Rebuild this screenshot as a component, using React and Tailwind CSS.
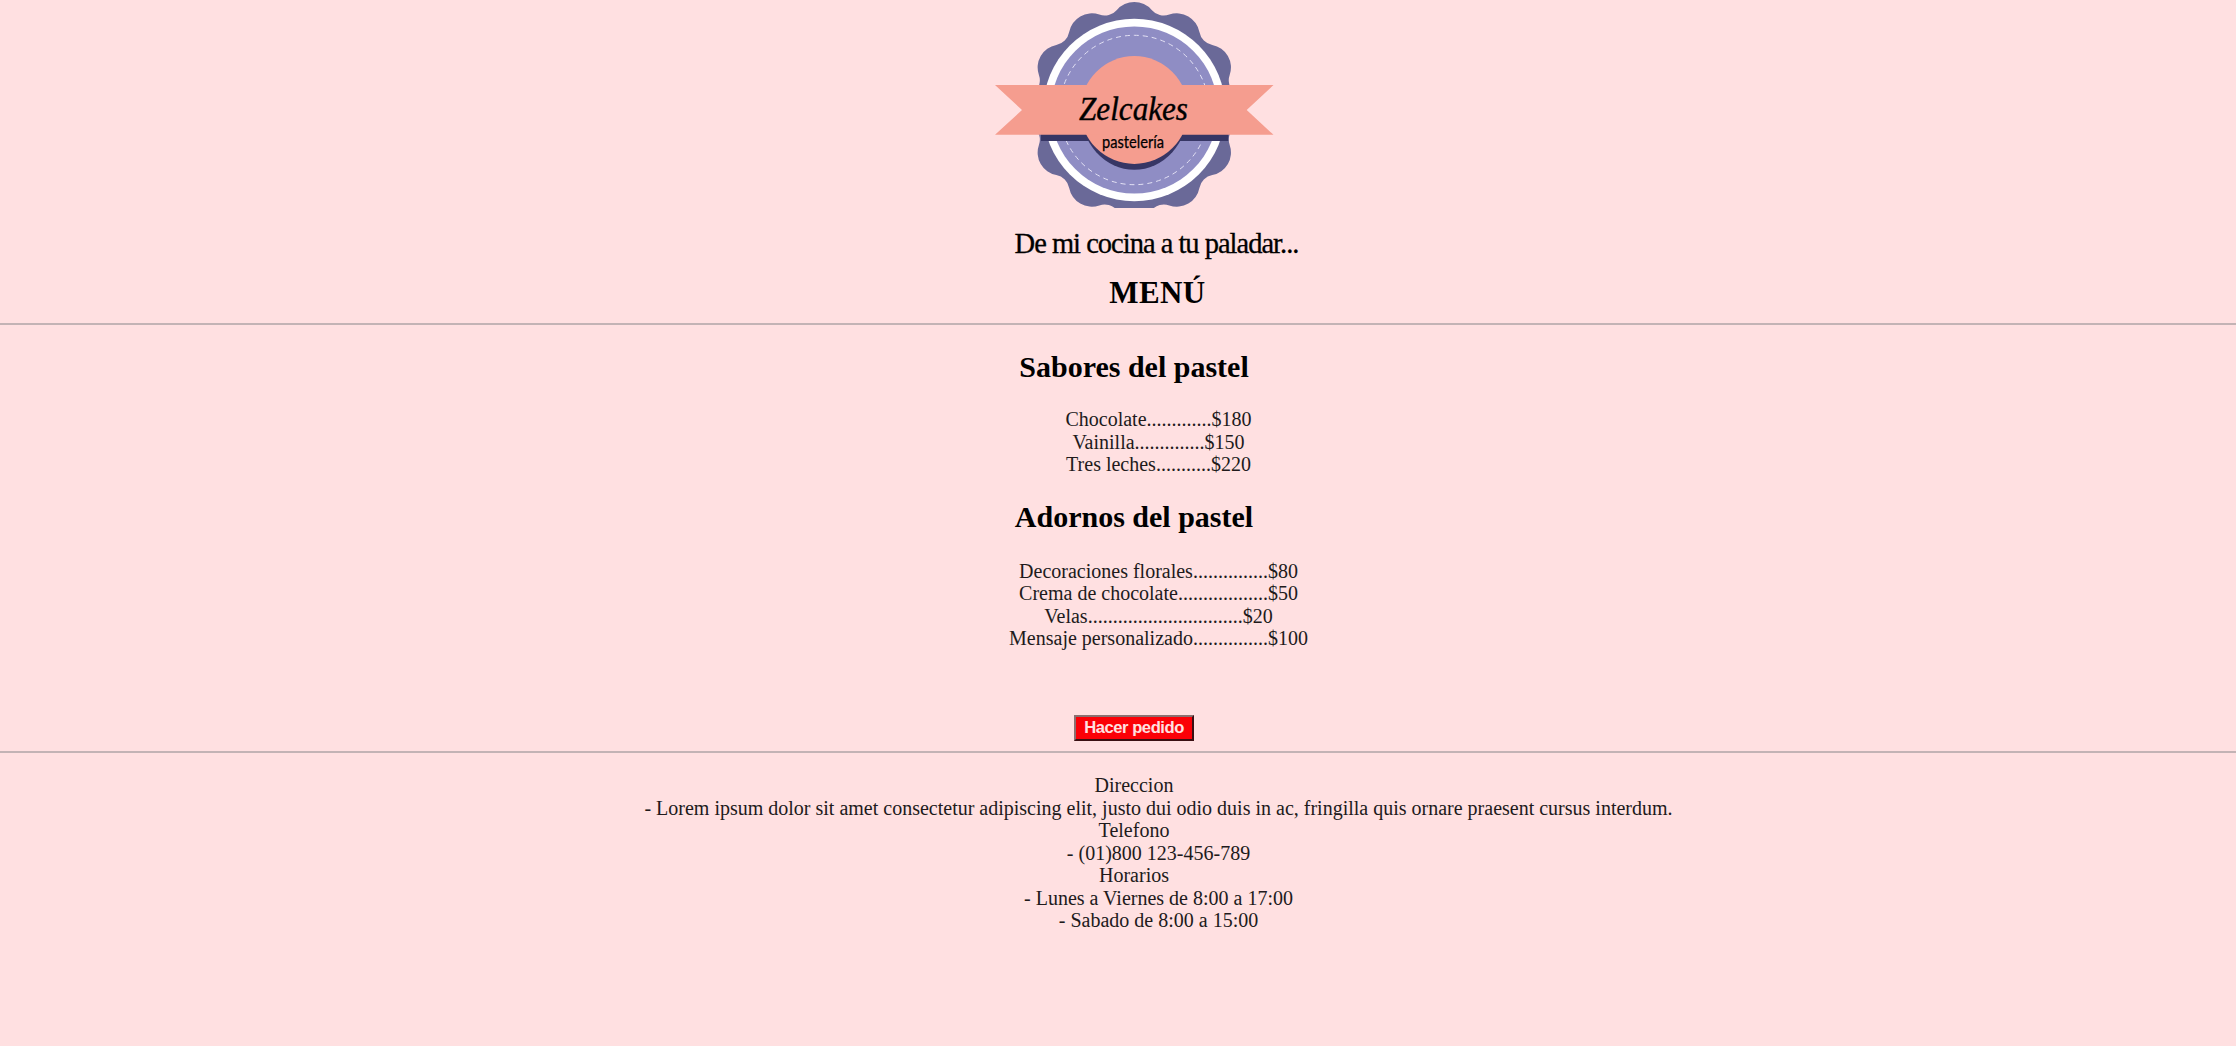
const CX = 139.3;
const CY = 110;

// Scalloped edge of the badge: twelve round lobes joined by concave arcs.
const scallop = (() => {
  const place = (deg, along, across) => {
    const a = (deg * Math.PI) / 180;
    const x = CX + along * Math.sin(a) + across * Math.cos(a);
    const y = CY - along * Math.cos(a) + across * Math.sin(a);
    return `${x.toFixed(2)} ${y.toFixed(2)}`;
  };
  let d = "";
  for (let i = 0; i < 12; i += 1) {
    const deg = i * 30;
    d += i === 0 ? `M${place(deg, 100.1, -17.4)}` : `A16 16 0 0 0 ${place(deg, 100.1, -17.4)}`;
    d += `A23 23 0 0 1 ${place(deg, 100.1, 17.4)}`;
  }
  return `${d}A16 16 0 0 0 ${place(0, 100.1, -17.4)}Z`;
})();

function Logo() {
  return (
    <svg width="279" height="208" viewBox="0 0 279 208" className="block" role="img" aria-label="Zelcakes">
      <path d={scallop} fill="#6a6998" />
      <circle cx={CX} cy={CY} r="91.2" fill="#fff" />
      <circle cx={CX} cy={CY} r="83.5" fill="#8f8dc4" />
      <circle cx={CX} cy={CY} r="74.7" fill="none" stroke="#e4e2f5" strokeWidth="1" strokeDasharray="5 4" />
      <path d="M46 130H233.3V141H46Z" fill="#373665" />
      <path d="M85.5 110A53.8 59.7 0 0 0 193.1 110Z" fill="#373665" />
      <circle cx={CX} cy={CY} r="53.9" fill="#f59d8f" />
      <path d="M0 85H278.5L251.7 110L278.5 134.8H0L27 110Z" fill="#f59d8f" />
      <text x="84" y="120" fontSize="34" fontStyle="italic" textLength="109" lengthAdjust="spacingAndGlyphs" stroke="#000" strokeWidth="0.4" className="font-['Z003','URW_Chancery_L','Liberation_Serif',cursive]">Zelcakes</text>
      <text x="107" y="148" fontSize="17" textLength="62" lengthAdjust="spacingAndGlyphs" stroke="#000" strokeWidth="0.25" className="font-['Lato',sans-serif]">pastelería</text>
    </svg>
  );
}

function Rule() {
  return <hr className="h-[2px] border-0 bg-[#c3b3b5]" />;
}

function Title({ children, className }) {
  return <h2 className={`pl-8 text-[30px] leading-[34px] font-bold ${className}`}>{children}</h2>;
}

function List({ items, className }) {
  return (
    <ul className={`pl-[81px] ${className}`}>
      {items.map((item) => (
        <li key={item}>{item}</li>
      ))}
    </ul>
  );
}

export default function App() {
  return (
    <div className="h-[1046px] w-full overflow-hidden bg-[#ffe0e1] text-center font-['Liberation_Serif',serif] text-[20px] leading-[22.5px] text-[#211a1b]">
      <header className="text-black">
        <div className="flex justify-center pl-8">
          <Logo />
        </div>
        <p className="mt-[18px] pl-[77px] text-[28.5px] leading-[36px] tracking-[-1px] [-webkit-text-stroke:0.3px_black]">De mi cocina a tu paladar...</p>
        <h1 className="mt-[13px] pl-[79px] text-[31px] leading-[36px] font-bold tracking-[0.4px]">MENÚ</h1>
      </header>
      <div className="mt-[12px]">
        <Rule />
      </div>
      <main>
        <Title className="mt-[25px] text-black">Sabores del pastel</Title>
        <List className="mt-[24px]" items={["Chocolate.............$180", "Vainilla..............$150", "Tres leches...........$220"]} />
        <Title className="mt-[24.5px] text-black">Adornos del pastel</Title>
        <List
          className="mt-[25.5px]"
          items={[
            "Decoraciones florales...............$80",
            "Crema de chocolate..................$50",
            "Velas...............................$20",
            "Mensaje personalizado...............$100",
          ]}
        />
        <div className="mt-[65.5px] flex justify-center pl-8">
          <button className="h-[26px] w-[120px] border-2 border-t-[#8b7070] border-r-[#3a1013] border-b-[#3a1013] border-l-[#8b7070] bg-[#fb0007] font-['Liberation_Sans',sans-serif] text-[16.6px] leading-[22px] font-bold tracking-[-0.45px] whitespace-nowrap text-[#ffe0e1]">
            Hacer pedido
          </button>
        </div>
      </main>
      <div className="mt-[10px]">
        <Rule />
      </div>
      <footer className="mt-[21px]">
        <p className="pl-8">Direccion</p>
        <p className="pl-[81px]">- Lorem ipsum dolor sit amet consectetur adipiscing elit, justo dui odio duis in ac, fringilla quis ornare praesent cursus interdum.</p>
        <p className="pl-8">Telefono</p>
        <p className="pl-[81px]">- (01)800 123-456-789</p>
        <p className="pl-8">Horarios</p>
        <p className="pl-[81px]">- Lunes a Viernes de 8:00 a 17:00</p>
        <p className="pl-[81px]">- Sabado de 8:00 a 15:00</p>
      </footer>
    </div>
  );
}
